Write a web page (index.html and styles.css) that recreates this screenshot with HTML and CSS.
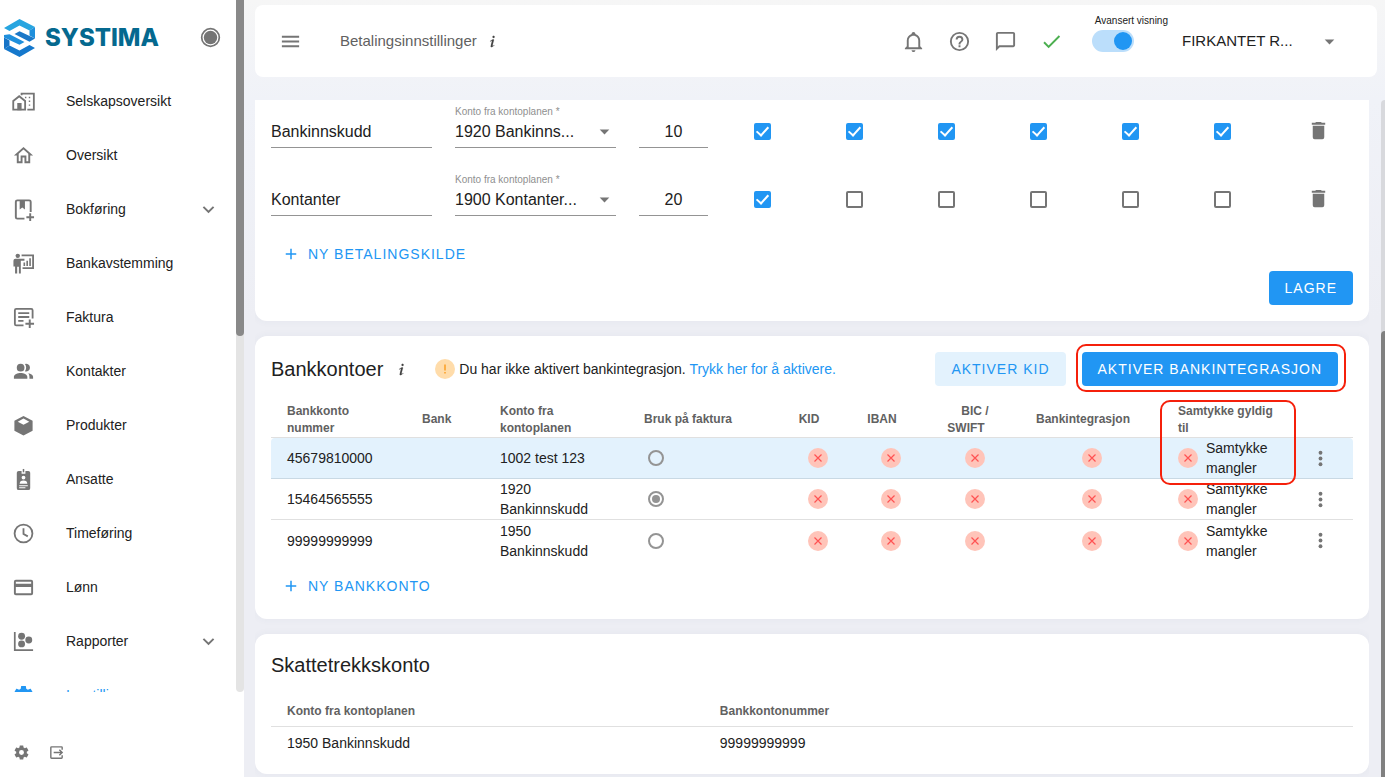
FILE: index.html
```html
<!DOCTYPE html>
<html lang="no">
  <head>
    <meta charset="UTF-8" />
    <meta name="viewport" content="width=device-width, initial-scale=1.0" />
    <title>Betalingsinnstillinger</title>
    <link rel="stylesheet" href="styles.css">
  </head>
  <body>
    <!-- Icons -->
    <svg class="sprite" aria-hidden="true">
      <symbol id="info" viewBox="0 0 24 24"><path stroke="currentColor" stroke-width="0.200" d="M13.5,4A1.5,1.5 0 0,0 12,5.5A1.5,1.5 0 0,0 13.5,7A1.5,1.5 0 0,0 15,5.5A1.5,1.5 0 0,0 13.5,4M13.14,8.77C11.95,8.87 8.7,11.46 8.7,11.46C8.5,11.61 8.56,11.6 8.72,11.88C8.88,12.15 8.86,12.17 9.05,12.04C9.25,11.91 9.58,11.7 10.13,11.36C12.25,10 10.47,13.14 9.56,18.43C9.2,21.05 11.56,19.7 12.17,19.3C12.77,18.91 14.38,17.8 14.54,17.69C14.76,17.54 14.6,17.42 14.43,17.17C14.31,17 14.19,17.12 14.19,17.12C13.54,17.55 12.35,18.45 12.19,17.88C12,17.31 13.22,13.4 13.89,10.71C14,10.07 14.3,8.67 13.14,8.77Z"/></symbol>
      <symbol id="caret" viewBox="0 0 24 24"><path d="M7,10L12,15L17,10H7Z"/></symbol>
      <symbol id="chevron" viewBox="0 0 24 24"><path d="M7.41,8.58L12,13.17L16.59,8.58L18,10L12,16L6,10L7.41,8.58Z"/></symbol>
      <symbol id="plus" viewBox="0 0 24 24"><path d="M19,13H13V19H11V13H5V11H11V5H13V11H19V13Z"/></symbol>
      <symbol id="trash" viewBox="0 0 24 24"><path d="M19,4H15.5L14.5,3H9.5L8.5,4H5V6H19M6,19A2,2 0 0,0 8,21H16A2,2 0 0,0 18,19V7H6V19Z"/></symbol>
      <symbol id="dots" viewBox="0 0 24 24"><circle cx="12" cy="6" r="2"/><circle cx="12" cy="12" r="2"/><circle cx="12" cy="18" r="2"/></symbol>
      <symbol id="cross" viewBox="0 0 20 20"><circle cx="10" cy="10" r="10" fill="#ffc4b9"/><path d="M6.5 6.5L13.5 13.5M13.5 6.5L6.5 13.5" fill="none" stroke="#ff5252" stroke-width="1.2"/></symbol>
      <symbol id="cog" viewBox="0 0 24 24"><path d="M12,15.5A3.5,3.5 0 0,1 8.5,12A3.5,3.5 0 0,1 12,8.5A3.5,3.5 0 0,1 15.5,12A3.5,3.5 0 0,1 12,15.5M19.43,12.97C19.47,12.65 19.5,12.33 19.5,12C19.5,11.67 19.47,11.34 19.43,11L21.54,9.37C21.73,9.22 21.78,8.95 21.66,8.73L19.66,5.27C19.54,5.05 19.27,4.96 19.05,5.05L16.56,6.05C16.04,5.66 15.5,5.32 14.87,5.07L14.5,2.42C14.46,2.18 14.25,2 14,2H10C9.75,2 9.54,2.18 9.5,2.42L9.13,5.07C8.5,5.32 7.96,5.66 7.44,6.05L4.95,5.05C4.73,4.96 4.46,5.05 4.34,5.27L2.34,8.73C2.21,8.95 2.27,9.22 2.46,9.37L4.57,11C4.53,11.34 4.5,11.67 4.5,12C4.5,12.33 4.53,12.65 4.57,12.97L2.46,14.63C2.27,14.78 2.21,15.05 2.34,15.27L4.34,18.73C4.46,18.95 4.73,19.03 4.95,18.95L7.44,17.94C7.96,18.34 8.5,18.68 9.13,18.93L9.5,21.58C9.54,21.82 9.75,22 10,22H14C14.25,22 14.46,21.82 14.5,21.58L14.87,18.93C15.5,18.67 16.04,18.34 16.56,17.94L19.05,18.95C19.27,19.03 19.54,18.95 19.66,18.73L21.66,15.27C21.78,15.05 21.73,14.78 21.54,14.63L19.43,12.97Z"/></symbol>
    </svg>

    <div class="app">
      <aside class="sidebar">
        <div class="sidebar-scroll">
          <div class="sidebar-content">
            <div class="brand">
              <svg class="brand-mark" viewBox="0 0 31 38" aria-hidden="true">
                <path d="M0 9L15.500 0L31 8L25.500 11.500L15.500 6.500L5.500 12Z" fill="#27a5e0"/>
                <path d="M31 8V19.500L25.500 16.500V11.500Z" fill="#1f8fdc"/>
                <path d="M10.500 15L15.500 12.200L31 19.500L25.500 22.800Z" fill="#1b78c8"/>
                <path d="M31 29L15.500 38L0 30L5.500 26.500L15.500 31.500L25.500 26Z" fill="#1578cc"/>
                <path d="M0 30V18.500L5.500 21.500V26.500Z" fill="#1673c6"/>
                <path d="M20.500 23L15.500 25.800L0 18.500V16L5.500 15.200Z" fill="#1f8fdc"/>
              </svg>
              <span class="brand-name">SYSTIMA</span>
              <svg class="icon record" viewBox="0 0 24 24" aria-hidden="true"><circle cx="12" cy="12" r="9.200" fill="none" stroke="currentColor" stroke-width="1.800"/><circle cx="12" cy="12" r="7"/></svg>
            </div>
            <nav class="menu">
              <a href="#">
                <svg class="icon" viewBox="0 0 24 24"><g fill="none" stroke="currentColor" stroke-width="1.900"><path d="M1.300 20.500V11.500L7.500 6.500L13.700 11.500V20.500H1.300Z"/><path d="M10 5.500V3.800H22.800V20.500H16"/></g><path d="M5.500 13.500H10V21H5.500ZM13.500 7H15V8.500H13.500ZM17.500 7H19V8.500H17.500ZM17.500 11H19V12.500H17.500ZM17.500 15H19V16.500H17.500Z"/></svg>
                <span>Selskapsoversikt</span>
              </a>
              <a href="#">
                <svg class="icon" viewBox="0 0 24 24"><path d="M12 5.690L17 10.190V18H15V12H9V18H7V10.190L12 5.690M12 3L2 12H5V20H11V14H13V20H19V12H22" /></svg>
                <span>Oversikt</span>
              </a>
              <a href="#">
                <svg class="icon" viewBox="0 0 24 24"><path d="M13 21.500H5.500Q4 21.500 4 20V4Q4 2.500 5.500 2.500H18Q19.500 2.500 19.500 4V14.500" fill="none" stroke="currentColor" stroke-width="2"/><path d="M8 3H13.500V12L10.750 9.800L8 12ZM18 16H20V19H23V21H20V24H18V21H15V19H18Z"/></svg>
                <span>Bokføring</span>
                <svg class="icon chevron"><use href="#chevron"/></svg>
              </a>
              <a href="#">
                <svg class="icon" viewBox="0 0 24 24"><circle cx="6" cy="4" r="2.300"/><path d="M3.500 7H13V9.200H9.200V22.500H7.200V15.500H5.400V22.500H3.200V15H1.500V9Q1.500 7 3.500 7ZM12 11H13.700V14.500H12ZM15 9H16.700V14.500H15ZM18 6.500H19.700V14.500H18Z"/><path d="M10 3.500H22V16.800H11" fill="none" stroke="currentColor" stroke-width="1.900"/></svg>
                <span>Bankavstemming</span>
              </a>
              <a href="#">
                <svg class="icon" viewBox="0 0 24 24"><path d="M12 20.200H4.500Q3 20.200 3 18.700V4.500Q3 3 4.500 3H20Q21.500 3 21.500 4.500V13M6.500 7.500H18M6.500 11.500H18M6.500 15.500H12" fill="none" stroke="currentColor" stroke-width="1.900"/><path d="M17.500 14H19.500V17.500H23V19.500H19.500V23H17.500V19.500H14V17.500H17.500Z"/></svg>
                <span>Faktura</span>
              </a>
              <a href="#">
                <svg class="icon" viewBox="0 0 24 24"><circle cx="9" cy="8" r="4"/><path d="M2 19.500V17.500C2 14.800 6 13.500 9 13.500S16 14.800 16 17.500V19.500ZM13.500 4.200A4 4 0 1 1 13.500 11.800Q16 8 13.500 4.200ZM17 13.800C19.500 14.300 22 15.500 22 17.500V19.500H18.200V17.500C18.200 16 17.800 14.800 17 13.800Z"/></svg>
                <span>Kontakter</span>
              </a>
              <a href="#">
                <svg class="icon" viewBox="0 0 24 24"><path fill-rule="evenodd" d="M12 2L21.500 7V17.500L12 22.500L2.500 17.500V7ZM12 4.800L6 8L12 11.200L18 8Z"/></svg>
                <span>Produkter</span>
              </a>
              <a href="#">
                <svg class="icon" viewBox="0 0 24 24"><path fill-rule="evenodd" d="M7 3H10V6H14V3H17Q19 3 19 5V21Q19 23 17 23H7Q5 23 5 21V5Q5 3 7 3ZM12 8A2 2 0 1 0 12 12A2 2 0 1 0 12 8ZM8 16.500H16Q16 13 12 13T8 16.500ZM7.500 18V19H16.500V18ZM7.500 20.200V21.200H14V20.200Z"/><path d="M11.200 1H12.800V4.500H11.200Z"/></svg>
                <span>Ansatte</span>
              </a>
              <a href="#">
                <svg class="icon" viewBox="0 0 24 24"><g fill="none" stroke="currentColor" stroke-width="1.900"><circle cx="12" cy="12" r="9.300"/><path d="M12 6.500V12.500L16.500 15"/></g></svg>
                <span>Timeføring</span>
              </a>
              <a href="#">
                <svg class="icon" viewBox="0 0 24 24"><path fill-rule="evenodd" d="M4 4H20Q22 4 22 6V18Q22 20 20 20H4Q2 20 2 18V6Q2 4 4 4ZM4 6V8H20V6ZM4 11.500V18H20V11.500Z"/></svg>
                <span>Lønn</span>
              </a>
              <a href="#">
                <svg class="icon" viewBox="0 0 24 24"><path d="M2 2H3.800V20.200H22V22H2Z"/><circle cx="10" cy="6.500" r="3.600"/><circle cx="10" cy="14.500" r="3.600"/><circle cx="17.500" cy="10.500" r="3.600"/></svg>
                <span>Rapporter</span>
                <svg class="icon chevron"><use href="#chevron"/></svg>
              </a>
              <a href="#" class="active">
                <svg class="icon"><use href="#cog"/></svg>
                <span>Innstillinger</span>
              </a>
            </nav>
          </div>
          <div class="scrollbar"><div class="thumb"></div></div>
        </div>
        <div class="sidebar-footer">
          <button class="icon-button" aria-label="Innstillinger"><svg class="icon small"><use href="#cog"/></svg></button>
          <button class="icon-button" aria-label="Logg ut"><svg class="icon small" viewBox="0 0 24 24"><path d="M20 8V5Q20 4 19 4H5Q4 4 4 5V19Q4 20 5 20H19Q20 20 20 19V16M8 12H20M16 8L20 12L16 16" fill="none" stroke="currentColor" stroke-width="2"/></svg></button>
        </div>
      </aside>

      <main class="main">
        <header class="topbar">
          <button class="icon-button" aria-label="Meny"><svg class="icon" viewBox="0 0 24 24"><path d="M3,6H21V8H3V6M3,11H21V13H3V11M3,16H21V18H3V16Z"/></svg></button>
          <span class="page-name">Betalingsinnstillinger</span>
          <svg class="icon info"><use href="#info"/></svg>
          <div class="tools">
            <button class="icon-button" aria-label="Varsler"><svg class="icon" viewBox="0 0 24 24"><path d="M10 21H14C14 22.1 13.1 23 12 23S10 22.1 10 21M21 19V20H3V19L5 17V11C5 7.900 7.030 5.170 10 4.290C10 4.190 10 4.100 10 4C10 2.900 10.900 2 12 2S14 2.900 14 4C14 4.100 14 4.190 14 4.290C16.970 5.170 19 7.900 19 11V17L21 19M17 11C17 8.240 14.760 6 12 6S7 8.240 7 11V18H17V11Z"/></svg></button>
            <button class="icon-button" aria-label="Hjelp"><svg class="icon" viewBox="0 0 24 24"><path d="M11,18H13V16H11V18M12,2A10,10 0 0,0 2,12A10,10 0 0,0 12,22A10,10 0 0,0 22,12A10,10 0 0,0 12,2M12,20C7.590,20 4,16.410 4,12C4,7.590 7.590,4 12,4C16.410,4 20,7.590 20,12C20,16.410 16.410,20 12,20M12,6A4,4 0 0,0 8,10H10A2,2 0 0,1 12,8A2,2 0 0,1 14,10C14,12 11,11.750 11,15H13C13,12.750 16,12.500 16,10A4,4 0 0,0 12,6Z"/></svg></button>
            <button class="icon-button" aria-label="Meldinger"><svg class="icon" viewBox="0 0 24 24"><path d="M20 2H4C2.900 2 2 2.900 2 4V22L6 18H20C21.100 18 22 17.100 22 16V4C22 2.900 21.100 2 20 2M20 16H5.200L4 17.200V4H20V16Z"/></svg></button>
            <button class="icon-button done" aria-label="Status"><svg class="icon" viewBox="0 0 24 24"><path d="M21,7L9,19L3.500,13.500L4.910,12.090L9,16.170L19.590,5.590L21,7Z"/></svg></button>
          </div>
          <div class="advanced">
            <label for="advanced">Avansert visning</label>
            <input id="advanced" class="switch" type="checkbox" checked />
          </div>
          <div class="select company">
            <select aria-label="Firma"><option>FIRKANTET R...</option></select>
            <svg class="icon"><use href="#caret"/></svg>
          </div>
        </header>

        <div class="content">
          <div class="cards">
            <!-- Betalingskilder -->
            <section class="card sources">
              <div class="source">
                <input class="text" type="text" value="Bankinnskudd" aria-label="Navn" />
                <div class="field">
                  <label for="account1">Konto fra kontoplanen *</label>
                  <div class="select">
                    <select id="account1"><option>1920 Bankinns...</option></select>
                    <svg class="icon"><use href="#caret"/></svg>
                  </div>
                </div>
                <input class="text number" type="text" value="10" aria-label="Sortering" />
                <input class="check" type="checkbox" aria-label="Valg 1" checked />
                <input class="check" type="checkbox" aria-label="Valg 2" checked />
                <input class="check" type="checkbox" aria-label="Valg 3" checked />
                <input class="check" type="checkbox" aria-label="Valg 4" checked />
                <input class="check" type="checkbox" aria-label="Valg 5" checked />
                <input class="check" type="checkbox" aria-label="Valg 6" checked />
                <button class="icon-button delete" aria-label="Slett"><svg class="icon"><use href="#trash"/></svg></button>
              </div>
              <div class="source">
                <input class="text" type="text" value="Kontanter" aria-label="Navn" />
                <div class="field">
                  <label for="account2">Konto fra kontoplanen *</label>
                  <div class="select">
                    <select id="account2"><option>1900 Kontanter...</option></select>
                    <svg class="icon"><use href="#caret"/></svg>
                  </div>
                </div>
                <input class="text number" type="text" value="20" aria-label="Sortering" />
                <input class="check" type="checkbox" aria-label="Valg 1" checked />
                <input class="check" type="checkbox" aria-label="Valg 2" />
                <input class="check" type="checkbox" aria-label="Valg 3" />
                <input class="check" type="checkbox" aria-label="Valg 4" />
                <input class="check" type="checkbox" aria-label="Valg 5" />
                <input class="check" type="checkbox" aria-label="Valg 6" />
                <button class="icon-button delete" aria-label="Slett"><svg class="icon"><use href="#trash"/></svg></button>
              </div>
              <button class="button link"><svg class="icon"><use href="#plus"/></svg>NY BETALINGSKILDE</button>
              <div class="actions"><button class="button primary">LAGRE</button></div>
            </section>

            <!-- Bankkontoer -->
            <section class="card">
              <div class="card-head">
                <h2>Bankkontoer</h2>
                <svg class="icon info"><use href="#info"/></svg>
                <p class="notice">
                  <svg class="badge" viewBox="0 0 20 20" aria-hidden="true"><circle cx="10" cy="10" r="10" fill="#ffdcaa"/><path d="M10 5.500V11.500M10 13V14.500" stroke="#fb9b1a" stroke-width="1.400"/></svg>
                  <span>Du har ikke aktivert bankintegrasjon. <a href="#">Trykk her for å aktivere.</a></span>
                </p>
                <div class="head-buttons">
                  <button class="button tonal">AKTIVER KID</button>
                  <button class="button primary marked">AKTIVER BANKINTEGRASJON</button>
                </div>
              </div>
              <table class="table accounts">
                <colgroup>
                  <col class="c-number"><col class="c-bank"><col class="c-plan"><col class="c-use"><col class="c-kid"><col class="c-iban"><col class="c-bic"><col class="c-integration"><col class="c-consent"><col class="c-more">
                </colgroup>
                <thead>
                  <tr>
                    <th>Bankkonto nummer</th>
                    <th>Bank</th>
                    <th>Konto fra kontoplanen</th>
                    <th>Bruk på faktura</th>
                    <th class="mid">KID</th>
                    <th class="mid">IBAN</th>
                    <th class="mid">BIC /<br>SWIFT</th>
                    <th class="mid">Bankintegrasjon</th>
                    <th class="consent-head">Samtykke gyldig til<span class="mark"></span></th>
                    <th></th>
                  </tr>
                </thead>
                <tbody>
                  <tr class="selected">
                    <td>45679810000</td>
                    <td></td>
                    <td>1002 test 123</td>
                    <td><input class="radio" type="radio" name="invoice" aria-label="Bruk 45679810000 på faktura" /></td>
                    <td class="mid"><svg class="badge"><use href="#cross"/></svg></td>
                    <td class="mid"><svg class="badge"><use href="#cross"/></svg></td>
                    <td class="mid"><svg class="badge"><use href="#cross"/></svg></td>
                    <td class="mid"><svg class="badge"><use href="#cross"/></svg></td>
                    <td><div class="consent"><svg class="badge"><use href="#cross"/></svg><span>Samtykke mangler</span></div></td>
                    <td class="mid"><button class="icon-button" aria-label="Mer"><svg class="icon"><use href="#dots"/></svg></button></td>
                  </tr>
                  <tr>
                    <td>15464565555</td>
                    <td></td>
                    <td>1920 Bankinnskudd</td>
                    <td><input class="radio" type="radio" name="invoice" aria-label="Bruk 15464565555 på faktura" checked /></td>
                    <td class="mid"><svg class="badge"><use href="#cross"/></svg></td>
                    <td class="mid"><svg class="badge"><use href="#cross"/></svg></td>
                    <td class="mid"><svg class="badge"><use href="#cross"/></svg></td>
                    <td class="mid"><svg class="badge"><use href="#cross"/></svg></td>
                    <td><div class="consent"><svg class="badge"><use href="#cross"/></svg><span>Samtykke mangler</span></div></td>
                    <td class="mid"><button class="icon-button" aria-label="Mer"><svg class="icon"><use href="#dots"/></svg></button></td>
                  </tr>
                  <tr>
                    <td>99999999999</td>
                    <td></td>
                    <td>1950 Bankinnskudd</td>
                    <td><input class="radio" type="radio" name="invoice" aria-label="Bruk 99999999999 på faktura" /></td>
                    <td class="mid"><svg class="badge"><use href="#cross"/></svg></td>
                    <td class="mid"><svg class="badge"><use href="#cross"/></svg></td>
                    <td class="mid"><svg class="badge"><use href="#cross"/></svg></td>
                    <td class="mid"><svg class="badge"><use href="#cross"/></svg></td>
                    <td><div class="consent"><svg class="badge"><use href="#cross"/></svg><span>Samtykke mangler</span></div></td>
                    <td class="mid"><button class="icon-button" aria-label="Mer"><svg class="icon"><use href="#dots"/></svg></button></td>
                  </tr>
                </tbody>
              </table>
              <button class="button link"><svg class="icon"><use href="#plus"/></svg>NY BANKKONTO</button>
            </section>

            <!-- Skattetrekk -->
            <section class="card">
              <h2>Skattetrekkskonto</h2>
              <table class="table tax">
                <thead>
                  <tr><th>Konto fra kontoplanen</th><th>Bankkontonummer</th></tr>
                </thead>
                <tbody>
                  <tr><td>1950 Bankinnskudd</td><td>99999999999</td></tr>
                </tbody>
              </table>
            </section>
          </div>
          <div class="page-scrollbar"><div class="thumb"></div></div>
        </div>
      </main>
    </div>
  </body>
</html>
```
FILE: styles.css
```css
* {
  margin: 0;
  padding: 0;
  box-sizing: border-box;
}

body {
  font-family: "Liberation Sans", Arial, sans-serif;
  font-size: 14px;
  line-height: 20px;
  color: #212121;
  background: linear-gradient(#f6f6f6, #f0f2f8 100px, #edeef4 320px);
}

input,
select,
button {
  font: inherit;
  color: inherit;
  border: none;
  background: none;
  appearance: none;
  outline: none;
}

a {
  color: #2196f3;
  text-decoration: none;
}

h2 {
  font-size: 20px;
  line-height: 30px;
  font-weight: 400;
}

.sprite {
  display: none;
}

.icon {
  width: 23px;
  height: 23px;
  flex: none;
  display: block;
  fill: currentColor;
  color: #757575;
}

.icon.small {
  width: 17px;
  height: 17px;
}

.icon.info {
  width: 17px;
  height: 17px;
  color: #424242;
}

.badge {
  width: 20px;
  height: 20px;
  flex: none;
  fill: none;
}

.icon-button {
  display: inline-flex;
  vertical-align: middle;
  cursor: pointer;
}

.app {
  display: flex;
  height: 100vh;
  overflow: hidden;
}

/* Sidebar */
.sidebar {
  width: 244px;
  flex: none;
  display: flex;
  flex-direction: column;
  background: #fff;
}

.sidebar-scroll {
  flex: 1;
  min-height: 0;
  display: flex;
}

.sidebar-content {
  flex: 1;
  overflow: hidden;
}

.scrollbar {
  width: 8px;
  background: #e4e4e4;
  border-radius: 0 0 4px 4px;
}

.scrollbar .thumb {
  height: 336px;
  background: #898989;
  border-radius: 0 0 4px 4px;
}

.brand {
  height: 74px;
  display: flex;
  align-items: center;
  gap: 10px;
  padding: 1px 14px 0 4px;
}

.brand-mark {
  width: 31px;
  height: 38px;
}

.brand-name {
  font-family: Inter, sans-serif;
  font-size: 24px;
  line-height: 30px;
  font-weight: 800;
  color: #05698f;
}

.record {
  margin-left: auto;
}

.menu a {
  height: 54px;
  display: flex;
  align-items: center;
  padding: 0 16px 0 12px;
  color: #212121;
}

.menu span {
  margin-left: 31px;
}

.menu .chevron {
  margin-left: auto;
}

.menu .active,
.menu .active .icon {
  color: #2196f3;
}

.sidebar-footer {
  height: 85px;
  display: flex;
  align-items: center;
  gap: 18px;
  padding: 35px 13px 0;
}

/* Main column */
.main {
  flex: 1;
  min-width: 0;
  display: flex;
  flex-direction: column;
  gap: 23px;
  padding: 5px 0 0 11px;
}

.topbar {
  height: 72px;
  flex: none;
  display: flex;
  align-items: center;
  margin-right: 8px;
  padding: 0 36px 0 24px;
  background: #fff;
  border-radius: 8px;
}

.page-name {
  margin: 0 7px 0 38px;
  font-size: 15px;
  color: #616161;
}

.tools {
  display: flex;
  gap: 23px;
  margin-left: auto;
}

.tools .done .icon {
  color: #4caf50;
}

.advanced {
  display: flex;
  flex-direction: column;
  gap: 2px;
  margin: 0 14px 16px 29px;
}

.advanced label {
  padding-left: 3px;
  font-size: 10px;
  line-height: 14px;
}

.switch {
  width: 42px;
  height: 22px;
  padding: 2px;
  display: flex;
  justify-content: flex-end;
  border-radius: 11px;
  background: #bbdefb;
}

.switch::after {
  content: "";
  width: 18px;
  height: 18px;
  border-radius: 50%;
  background: #2196f3;
}

.select {
  display: flex;
  align-items: center;
}

.select select {
  flex: 1;
  min-width: 0;
  font-size: 16px;
}

.select .icon {
  pointer-events: none;
}

.select.company {
  width: 159px;
}

.company select {
  font-size: 15px;
}

.content {
  flex: 1;
  min-height: 0;
  display: flex;
}

.cards {
  flex: 1;
  overflow: hidden;
  display: flex;
  flex-direction: column;
  gap: 15px;
}

.page-scrollbar {
  width: 4px;
  margin-left: 12px;
  background: #d8d9dd;
  border-radius: 4px 0 0 0;
}

.page-scrollbar .thumb {
  height: 460px;
  margin-top: 231px;
  background: #808080;
  border-radius: 4px 0 0 4px;
}

.card {
  flex: none;
  padding: 16px;
  background: #fff;
  border-radius: 12px;
  box-shadow: 0 0 8px rgba(60, 70, 120, 0.05);
}

.card.sources {
  padding-top: 0;
  border-radius: 0 0 12px 12px;
}

/* Payment sources */
.source {
  display: grid;
  grid-template-columns: 161fr 161fr repeat(7, 69fr) 70px;
  column-gap: 23px;
  align-items: end;
  height: 48px;
  margin-bottom: 20px;
}

.text,
.field .select {
  width: 100%;
  height: 29px;
  padding-bottom: 3px;
  border-bottom: 1px solid #949494;
  font-size: 16px;
}

.number {
  text-align: center;
}

.field label {
  display: block;
  font-size: 10px;
  line-height: 14px;
  color: #8f8f8f;
}

.check {
  width: 17px;
  height: 17px;
  margin: 0 0 8px 23px;
  border: 2px solid #757575;
  border-radius: 2px;
}

.check:checked {
  border-color: #2196f3;
  background: #2196f3;
}

.check:checked::after {
  content: "";
  display: block;
  box-sizing: border-box;
  width: 7px;
  height: 12px;
  margin: -1px 0 0 3px;
  border: solid #fff;
  border-width: 0 2px 2px 0;
  transform: rotate(42deg);
}

.delete {
  justify-self: center;
  margin-bottom: 6px;
}

/* Buttons */
.button {
  height: 34px;
  padding: 0 16px;
  display: inline-flex;
  align-items: center;
  border-radius: 4px;
  letter-spacing: 1px;
  cursor: pointer;
}

.button .icon {
  width: 18px;
  height: 18px;
  color: inherit;
}

.button.primary {
  color: #fff;
  background: #2196f3;
}

.button.tonal {
  color: #2196f3;
  background: #e3f2fd;
}

.button.link {
  display: flex;
  gap: 8px;
  height: 35px;
  padding: 0 11px;
  color: #2196f3;
}

.actions {
  display: flex;
  justify-content: flex-end;
}

/* Bank accounts */
.card-head {
  display: flex;
  align-items: center;
  height: 34px;
}

.card-head .info {
  margin-left: 10px;
}

.notice {
  display: flex;
  align-items: center;
  gap: 4px;
  margin-left: 25px;
}

.head-buttons {
  display: flex;
  gap: 16px;
  margin: 0 15px 0 auto;
}

.marked {
  position: relative;
}

.marked::after,
.mark {
  content: "";
  position: absolute;
  inset: -8px -8px -6px -6px;
  border: 2px solid #f5200b;
  border-radius: 10px;
}

.consent-head {
  position: relative;
}

.consent-head .mark {
  inset: -2px -8px -48px -2px;
}

.table {
  width: 100%;
  table-layout: fixed;
  border-spacing: 0;
}

.table th,
.table td {
  padding: 0 0 0 16px;
  text-align: left;
  border-bottom: 1px solid #e0e0e0;
}

.table th {
  font-size: 12px;
  line-height: 17px;
  color: #616161;
}

.table tbody tr:last-child td {
  border-bottom: none;
}

.accounts {
  margin: 16px 0 7px;
}

.accounts th {
  height: 36px;
  padding-right: 8px;
}

.accounts td {
  height: 41px;
  padding-right: 16px;
}

.table .mid {
  padding: 0;
  text-align: center;
}

.accounts th.mid::after {
  content: "";
  display: inline-block;
  width: 18px;
}

.accounts svg {
  display: inline-block;
  vertical-align: middle;
}

.accounts .mid .badge {
  display: block;
  margin: 0 auto;
}

.selected td {
  background: #e3f2fd;
  border-color: #c9d9e4;
}

.selected td:first-child {
  border-top-left-radius: 4px;
}

.selected td:last-child {
  border-top-right-radius: 4px;
}

.c-number { width: 135px; }
.c-bank { width: 78px; }
.c-plan { width: 144px; }
.c-use { width: 154px; }
.c-kid { width: 72px; }
.c-iban { width: 74px; }
.c-bic { width: 94px; }
.c-integration { width: 140px; }
.c-consent { width: 126px; }
.c-more { width: 65px; }

.radio {
  display: block;
  width: 16px;
  height: 16px;
  margin-left: 4px;
  border: 2px solid #949494;
  border-radius: 50%;
}

.radio:checked {
  padding: 2px;
  background: #949494 content-box;
}

.consent {
  display: flex;
  align-items: center;
  gap: 8px;
}

.tax {
  margin-top: 16px;
}

.tax th {
  width: 40%;
  height: 31px;
}

.tax th:last-child {
  width: 60%;
}

.tax td {
  height: 31px;
}
```
